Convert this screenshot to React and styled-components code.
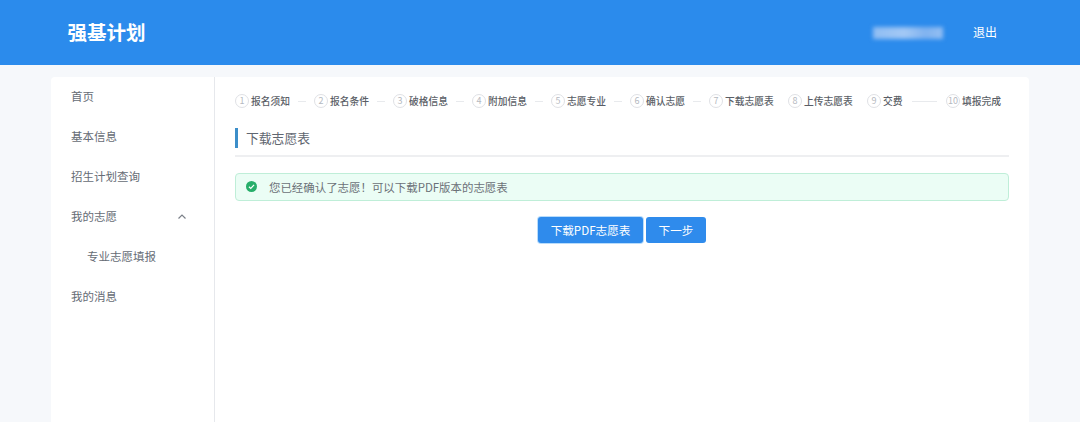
import React from 'react';
import styled, { createGlobalStyle } from 'styled-components';

const GlobalStyle = createGlobalStyle`
  html, body {
    margin: 0;
    height: 100%;
    overflow: hidden;
    background: #f6f8fb;
  }
  body {
    font-family: "Noto Sans CJK SC", "Liberation Sans", sans-serif;
  }
`;

const Page = styled.div`
  height: 422px;
  display: flex;
  flex-direction: column;
  overflow: hidden;
`;

const Header = styled.header`
  flex: 0 0 65px;
  box-sizing: border-box;
  background: #2b8bec;
  display: flex;
  align-items: center;
  padding: 0 83px 2px 67.5px;
`;

const Logo = styled.div`
  color: #fff;
  font-size: 19.5px;
  font-weight: 700;
  flex: 1;
`;

const BlurName = styled.div`
  width: 70px;
  height: 12px;
  margin: 2px 30px 0 0;
  background: linear-gradient(90deg, #8fbdf3, #a3c8f5 45%, #80b2ef 75%, #94bff3);
  filter: blur(2px);
`;

const Logout = styled.div`
  color: #fff;
  font-size: 12px;
`;

const Card = styled.div`
  flex: 1;
  margin: 12px 51px 0;
  background: #fff;
  border-radius: 4px 4px 0 0;
  display: flex;
  min-height: 0;
`;

const Sidebar = styled.nav`
  flex: 0 0 163px;
  border-right: 1px solid #e6e8ec;
`;

const MenuItem = styled.div`
  height: 40px;
  box-sizing: border-box;
  display: flex;
  align-items: center;
  justify-content: space-between;
  padding: 0 27px 2px ${(p) => (p.$sub ? 36 : 20)}px;
  color: #666c75;
  font-size: 11.5px;
`;

const Chevron = styled.svg`
  width: 10px;
  height: 10px;
  margin-top: 2px;
`;

const Main = styled.main`
  flex: 1;
  padding: 16px 20px 0;
`;

const Steps = styled.div`
  display: flex;
  align-items: center;
  height: 16px;
`;

const Step = styled.div`
  flex: 0 0 ${(p) => (p.$last ? 'auto' : '79px')};
  display: flex;
  align-items: center;
  min-width: 0;
`;

const StepNum = styled.span`
  flex: none;
  width: 12px;
  height: 12px;
  border: 1px solid #dfe1e5;
  border-radius: 50%;
  color: #b5b9c0;
  font-size: 9px;
  line-height: 12px;
  text-align: center;
  margin-right: 2px;
`;

const StepLabel = styled.span`
  flex: none;
  color: #5a5e66;
  font-size: 9.75px;
  font-weight: 500;
`;

const StepLine = styled.span`
  flex: 1;
  height: 1px;
  background: #e8eaed;
  margin: 0 ${(p) => (p.$wide ? 9 : 8)}px;
`;

const Title = styled.h2`
  margin: 19px 0 0;
  height: 20px;
  line-height: 20px;
  padding-left: 8px;
  border-left: 3px solid #3c8ec9;
  color: #5f6670;
  font-size: 12.8px;
  font-weight: 400;
`;

const Divider = styled.div`
  height: 2px;
  margin-top: 7px;
  background: #eeeff1;
`;

const Alert = styled.div`
  margin-top: 16px;
  height: 28px;
  box-sizing: border-box;
  display: flex;
  align-items: center;
  padding-left: 10px;
  background: #ebfdf5;
  border: 1px solid #bfeed8;
  border-radius: 4px;
  color: #6b7178;
  font-size: 11.45px;
`;

const AlertIcon = styled.svg`
  flex: none;
  width: 11px;
  height: 11px;
  margin: -2px 12px 0 0;
`;

const Buttons = styled.div`
  display: flex;
  justify-content: center;
  gap: 3px;
  margin-top: 16px;
`;

const Button = styled.button`
  height: 26px;
  width: ${(p) => p.$width}px;
  padding: 0;
  border: none;
  border-radius: 3px;
  background: #2f8bec;
  color: #fff;
  font-family: inherit;
  font-size: 11.6px;
  box-shadow: ${(p) => (p.$focused ? '0 0 0 1px #b8dcfb' : 'none')};
`;

const steps = ['报名须知', '报名条件', '破格信息', '附加信息', '志愿专业', '确认志愿', '下载志愿表', '上传志愿表', '交费', '填报完成'];

const App = () => (
  <Page>
    <GlobalStyle />
    <Header>
      <Logo>强基计划</Logo>
      <BlurName />
      <Logout>退出</Logout>
    </Header>
    <Card>
      <Sidebar>
        <MenuItem>首页</MenuItem>
        <MenuItem>基本信息</MenuItem>
        <MenuItem>招生计划查询</MenuItem>
        <MenuItem>
          我的志愿
          <Chevron viewBox="0 0 10 10" fill="none" stroke="#7b8089" strokeWidth="1.2">
            <path d="M1.5 6.5 5 3l3.5 3.5" />
          </Chevron>
        </MenuItem>
        <MenuItem $sub>专业志愿填报</MenuItem>
        <MenuItem>我的消息</MenuItem>
      </Sidebar>
      <Main>
        <Steps>
          {steps.map((label, i) => (
            <Step key={label} $last={i === 9}>
              <StepNum>{i + 1}</StepNum>
              <StepLabel>{label}</StepLabel>
              {i < 9 && i !== 6 && i !== 7 && <StepLine $wide={i === 8} />}
            </Step>
          ))}
        </Steps>
        <Title>下载志愿表</Title>
        <Divider />
        <Alert>
          <AlertIcon viewBox="0 0 12 12">
            <circle cx="6" cy="6" r="6" fill="#27ae6a" />
            <path d="M3.2 6.2 5.2 8l3.6-3.8" fill="none" stroke="#fff" strokeWidth="1.3" />
          </AlertIcon>
          您已经确认了志愿！可以下载PDF版本的志愿表
        </Alert>
        <Buttons>
          <Button $width={105} $focused>下载PDF志愿表</Button>
          <Button $width={60}>下一步</Button>
        </Buttons>
      </Main>
    </Card>
  </Page>
);

export default App;
